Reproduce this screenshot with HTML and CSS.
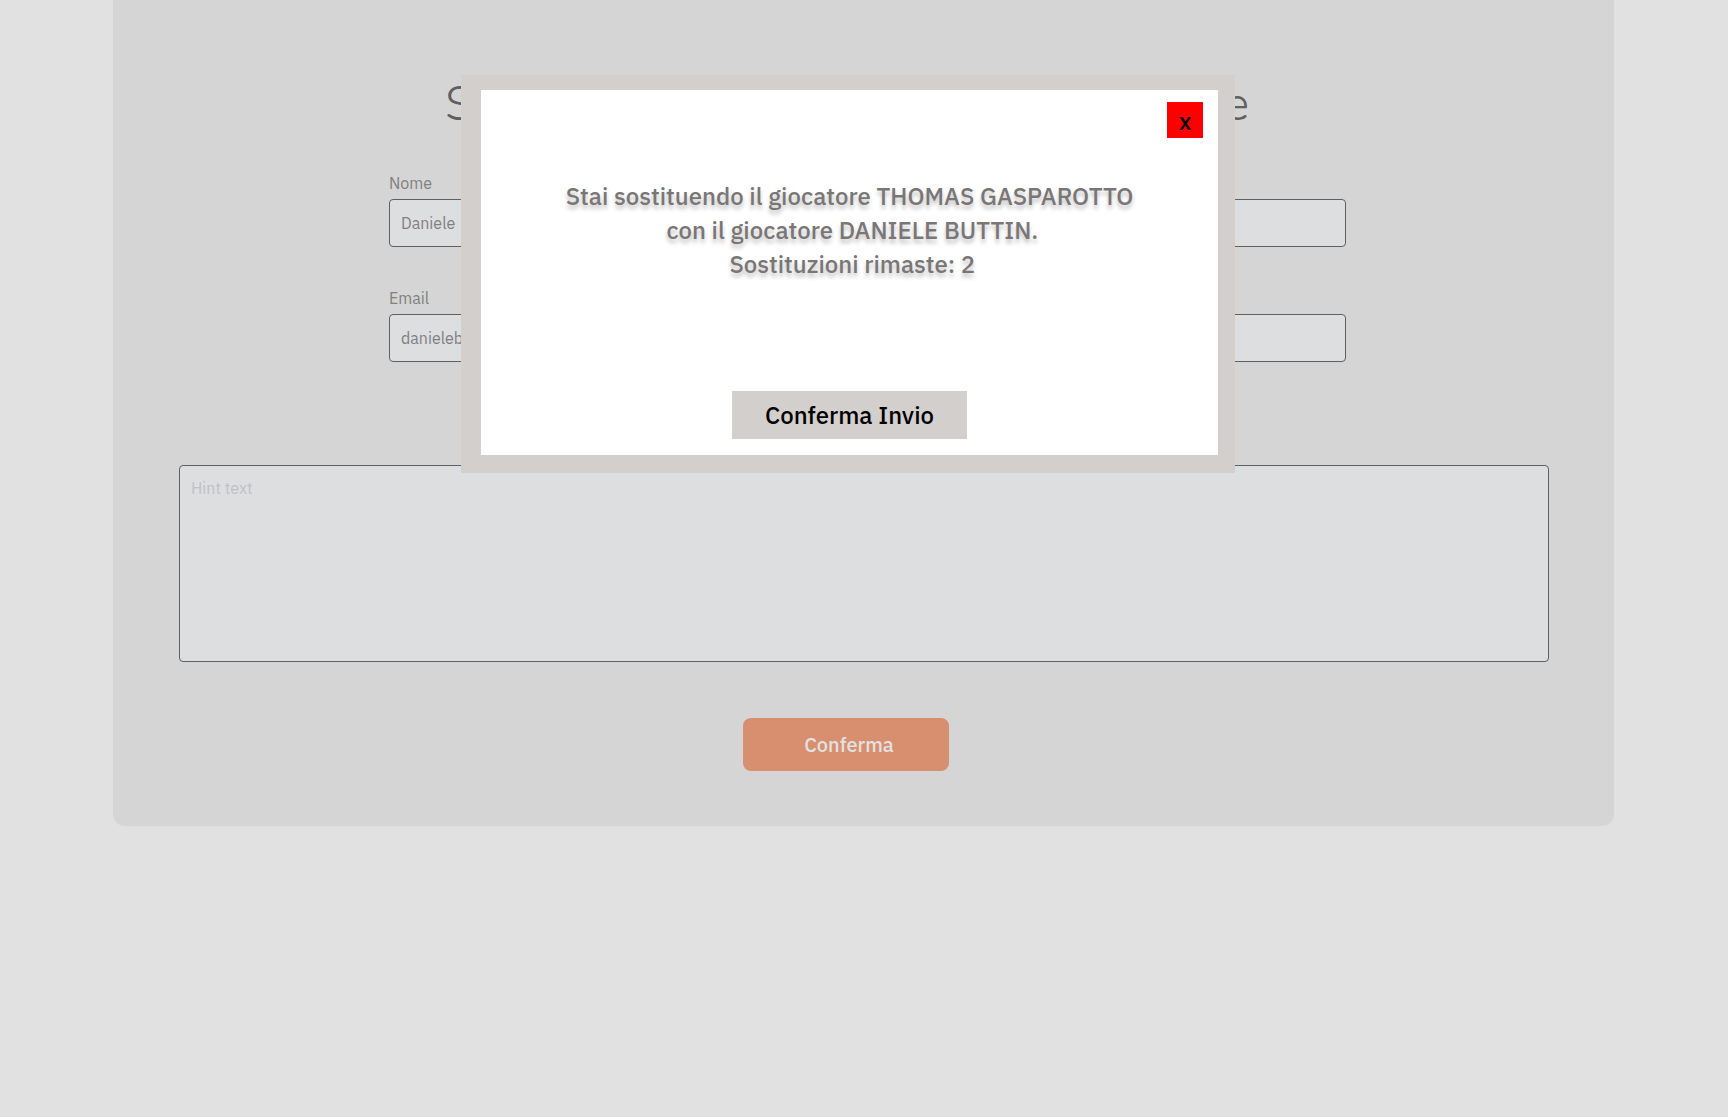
FILE: index.html
```html
<!DOCTYPE html>
<html lang="it">
<head>
<meta charset="utf-8">
<meta name="viewport" content="width=device-width, initial-scale=1">
<title>Sostituzione giocatore</title>
<link rel="stylesheet" href="styles.css">
</head>
<body>
<main class="card">
  <h1 class="title">Sostituzione volontaria di un giocatore</h1>
  <form class="form">
    <div class="fields">
      <div class="field">
        <label class="label" for="nome">Nome</label>
        <input class="input" id="nome" type="text" value="Daniele">
      </div>
      <div class="field">
        <label class="label" for="email">Email</label>
        <input class="input" id="email" type="email" value="danielebuttin@gmail.com">
      </div>
    </div>
    <textarea class="input message" aria-label="Messaggio" placeholder="Hint text"></textarea>
    <div class="actions">
      <button class="submit" type="submit">Conferma</button>
    </div>
  </form>
</main>
<div class="overlay">
  <section class="modal" role="dialog" aria-modal="true" aria-labelledby="modal-text">
    <div class="dialog">
      <button class="close" type="button" aria-label="Chiudi">x</button>
      <p class="text" id="modal-text">Stai sostituendo il giocatore THOMAS GASPAROTTO<br>&nbsp;con il giocatore DANIELE BUTTIN.<br>&nbsp;Sostituzioni rimaste: 2</p>
      <button class="confirm" type="button">Conferma Invio</button>
    </div>
  </section>
</div>
</body>
</html>
```
FILE: styles.css
```css
* { box-sizing: border-box; }

body {
  margin: 0;
  min-height: 100vh;
  background: #e1e1e1;
  font-family: "IBM Plex Sans", Roboto, "Liberation Sans", sans-serif;
  font-size: 16px;
  line-height: 24px;
  color: #808080;
}

button, input, textarea { font: inherit; }
button { border: 0; padding: 0; cursor: pointer; }

.card {
  margin: 0 114px 0 113px;
  padding: 72px 65px 55px 66px;
  border-radius: 0 0 12px 12px;
  background: #d5d5d5;
}

.title {
  margin: 0 0 35px;
  padding-right: 34px;
  font-family: Nunito, "Open Sans", sans-serif;
  font-size: 48px;
  line-height: 64px;
  font-weight: 350;
  text-align: center;
  white-space: nowrap;
  color: #606060;
}

.form { display: flex; flex-direction: column; }

.fields {
  display: flex;
  flex-direction: column;
  gap: 39px;
  margin: 0 203px 103px 210px;
}

.field {
  display: flex;
  flex-direction: column;
  gap: 4px;
}

.input {
  width: 100%;
  height: 48px;
  padding: 0 11px;
  border: 1px solid #606060;
  border-radius: 4px;
  background: #dddee0;
  color: #808080;
}

.message {
  height: 197px;
  padding: 10px 11px;
  resize: none;
}

.message::placeholder { color: #c0c0c8; opacity: 1; }

.actions {
  display: flex;
  justify-content: center;
  margin-top: 56px;
  padding-right: 36px;
}

.submit {
  width: 206px;
  height: 53px;
  padding-left: 6px;
  border-radius: 8px;
  background: #d78f6f;
  color: #e3e1e0;
  font-size: 20px;
  font-weight: 500;
}

.overlay {
  position: absolute;
  inset: 0;
  display: flex;
  justify-content: center;
  align-items: flex-start;
  padding: 75px 32px 0 0;
}

.modal {
  width: 774px;
  padding: 15px 17px 18px 20px;
  background: #d3cfcd;
}

.dialog {
  display: flex;
  flex-direction: column;
  align-items: center;
  padding: 12px 15px 16px;
  background: #fff;
}

.close {
  align-self: flex-end;
  width: 36px;
  height: 36px;
  padding-top: 2px;
  background: #f00;
  color: #000;
  font-size: 24px;
  font-weight: 500;
}

.text {
  margin: 41px 0 110px;
  font-size: 24px;
  line-height: 34px;
  font-weight: 500;
  text-align: center;
  text-shadow: 0 4px 4px rgba(0, 0, 0, 0.25);
  color: #7a7676;
}

.confirm {
  width: 235px;
  height: 48px;
  background: #d3cfcd;
  color: #000;
  font-size: 24px;
  font-weight: 500;
}
```
